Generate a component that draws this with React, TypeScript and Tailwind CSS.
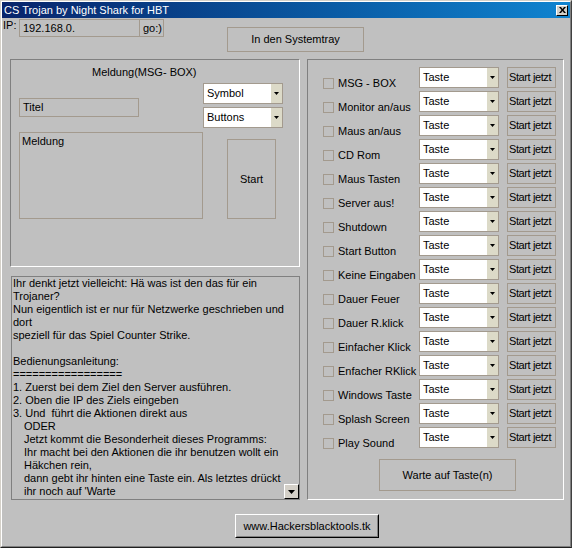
import React from "react";

const B = "border-[#a39a8e]";

function Combo({ label }: { label: string }) {
  return (
    <div className={`w-[80px] h-[21px] border ${B} bg-white flex shrink-0`}>
      <div className="flex-1 pl-[3px] flex items-center whitespace-nowrap overflow-hidden">{label}</div>
      <div className="w-[12px] h-full bg-[#dcdac8] border-l border-white flex items-center justify-center">
        <svg width="5" height="3" viewBox="0 0 5 3">
          <path d="M0 0h5L2.5 3z" fill="black" />
        </svg>
      </div>
    </div>
  );
}

const actions = [
  "MSG - BOX",
  "Monitor an/aus",
  "Maus an/aus",
  "CD Rom",
  "Maus Tasten",
  "Server aus!",
  "Shutdown",
  "Start Button",
  "Keine Eingaben",
  "Dauer Feuer",
  "Dauer R.klick",
  "Einfacher Klick",
  "Enfacher RKlick",
  "Windows Taste",
  "Splash Screen",
  "Play Sound",
];

const lines: [string, boolean][] = [
  ["Ihr denkt jetzt vielleicht: Hä was ist den das für ein", false],
  ["Trojaner?", false],
  ["Nun eigentlich ist er nur für Netzwerke geschrieben und", false],
  ["dort", false],
  ["speziell für das Spiel Counter Strike.", false],
  ["", false],
  ["Bedienungsanleitung:", false],
  ["=================", false],
  ["1. Zuerst bei dem Ziel den Server ausführen.", false],
  ["2. Oben die IP des Ziels eingeben", false],
  ["3. Und  führt die Aktionen direkt aus", false],
  ["ODER", true],
  ["Jetzt kommt die Besonderheit dieses Programms:", true],
  ["Ihr macht bei den Aktionen die ihr benutzen wollt ein", true],
  ["Häkchen rein,", true],
  ["dann gebt ihr hinten eine Taste ein. Als letztes drückt", true],
  ["ihr noch auf 'Warte", true],
];

export default function App() {
  return (
    <div className="w-[572px] h-[548px] bg-[#c0c0c0] border border-t-[#d4d0c8] border-l-[#d4d0c8] border-r-[#404040] border-b-[#202020] font-['Liberation_Sans',Arial,sans-serif] text-[11px] leading-[13px] text-black">
      <div className="h-full border border-t-white border-l-white border-r-[#808080] border-b-[#808080] flex flex-col">
        {/* title bar */}
        <div className="h-[16px] shrink-0 bg-gradient-to-r from-[#08246b] to-[#1084d0] flex items-center justify-between">
          <span className="pl-[2px] text-white whitespace-nowrap">CS Trojan by Night Shark for HBT</span>
          <div className="w-[12px] h-[11px] mr-[2px] bg-[#d4d0c8] border border-t-white border-l-white border-r-black border-b-black flex items-center justify-center">
            <svg width="7" height="6" viewBox="0 0 7 6">
              <path d="M0 0h2l1.5 2 1.5-2h2L4.5 3 7 6H5L3.5 4 2 6H0l2.5-3z" fill="black" />
            </svg>
          </div>
        </div>

        {/* IP row */}
        <div className="flex items-start mt-[1px]">
          <div className="ml-[1px] w-[16px]">IP:</div>
          <div className={`w-[121px] h-[18px] border ${B} pl-[3px] flex items-center`}>192.168.0.</div>
          <div className={`w-[25px] h-[18px] border ${B} -ml-px pl-[3px] flex items-center`}>go:)</div>
          <div className={`ml-[63px] mt-[8px] w-[137px] h-[25px] border ${B} flex items-center justify-center`}>
            In den Systemtray
          </div>
        </div>

        {/* main */}
        <div className="flex items-start mt-[7px]">
          <div className="ml-[8px] flex flex-col">
            {/* left group */}
            <div className="w-[290px] h-[208px] border border-t-[#808080] border-l-[#808080] border-r-white border-b-white flex flex-col">
              <div className="pt-[6px] pl-[81px] whitespace-nowrap">Meldung(MSG- BOX)</div>
              <div className="flex items-start">
                <div className="ml-[8px] mt-[19px] w-[184px] flex flex-col">
                  <div className={`w-[120px] h-[19px] border ${B} pl-[3px] flex items-center`}>Titel</div>
                  <div className={`mt-[15px] w-[184px] h-[87px] border ${B} pl-[2px] pt-[2px]`}>Meldung</div>
                </div>
                <div className="mt-[4px] flex flex-col">
                  <Combo label="Symbol" />
                  <div className="mt-[3px]">
                    <Combo label="Buttons" />
                  </div>
                  <div className={`ml-[24px] mt-[11px] w-[49px] h-[80px] border ${B} flex items-center justify-center`}>
                    Start
                  </div>
                </div>
              </div>
            </div>
            {/* text area */}
            <div className="relative mt-[9px] ml-[1px] w-[289px] h-[224px] border border-[#808080] overflow-hidden">
              {lines.map(([t, indent], i) => (
                <div key={i} className={`h-[13px] whitespace-pre ${indent ? "pl-[12px]" : "pl-[1px]"}`}>
                  {t}
                </div>
              ))}
              <div className="absolute right-0 bottom-0 w-[15px] h-[15px] bg-[#d4d0c8] border border-t-white border-l-white border-r-black border-b-black flex items-center justify-center">
                <svg width="7" height="4" viewBox="0 0 7 4">
                  <path d="M0 0h7L3.5 4z" fill="black" />
                </svg>
              </div>
            </div>
          </div>

          {/* right group */}
          <div className="ml-[7px] w-[257px] h-[441px] border border-t-[#808080] border-l-[#808080] border-r-white border-b-white flex flex-col pt-[7px]">
            <div className="flex flex-col gap-[3px]">
              {actions.map((a) => (
                <div key={a} className="h-[21px] flex items-start">
                  <div className="w-[111px] mt-[10px] h-[13px] flex items-center">
                    <div className={`ml-[15px] w-[11px] h-[11px] border ${B} shrink-0`} />
                    <span className="ml-[4px] whitespace-nowrap">{a}</span>
                  </div>
                  <Combo label="Taste" />
                  <div className={`ml-[8px] w-[49px] h-[21px] border ${B} pl-[1px] flex items-center whitespace-nowrap overflow-hidden tracking-[-0.4px]`}>
                    Start jetzt
                  </div>
                </div>
              ))}
            </div>
            <div className={`ml-[71px] mt-[11px] w-[137px] h-[32px] border ${B} flex items-center justify-center`}>
              Warte auf Taste(n)
            </div>
          </div>
        </div>

        {/* bottom button */}
        <div className="mt-[14px] ml-[233px] w-[144px] h-[24px] border border-t-white border-l-white border-r-black border-b-black">
          <div className="w-full h-full border border-transparent border-r-[#808080] border-b-[#808080] flex items-center justify-center">
            www.Hackersblacktools.tk
          </div>
        </div>
      </div>
    </div>
  );
}
